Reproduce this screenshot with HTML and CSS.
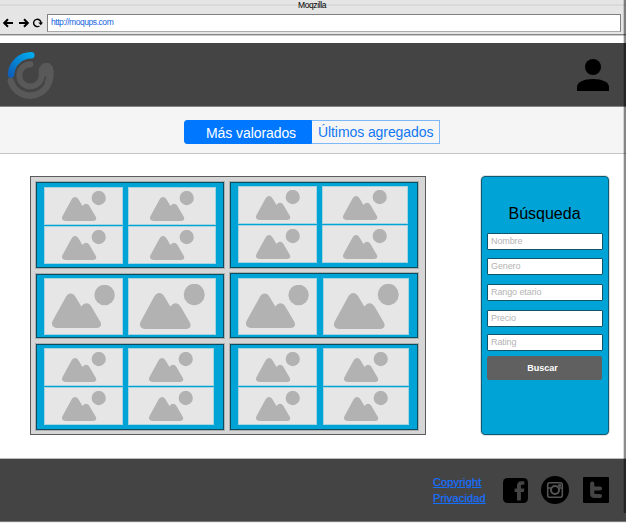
FILE: index.html
```html
<!DOCTYPE html>
<html lang="es">
<head>
<meta charset="utf-8">
<title>Moqzilla</title>
<link rel="stylesheet" href="styles.css">
</head>
<body>
<svg class="defs" aria-hidden="true">
  <symbol id="picture" viewBox="0 0 133 90" preserveAspectRatio="none">
    <circle cx="111" cy="21" r="21.5"/>
    <path d="M12 90C1 90-3 83 2 74L28 27C34 15 45 15 51 27L62 45C69 36 77 36 83 45L102 77C106 85 102 90 94 90Z"/>
  </symbol>
</svg>
<div class="chrome">
  <div class="window-title">Moqzilla</div>
  <div class="toolbar">
    <svg class="tool-icons" viewBox="0 0 43 14" fill="none" stroke="#000" stroke-width="2">
      <path d="M13 7H4.5M8 3.2L4.2 7L8 10.8M19 7H27.5M24 3.2L27.8 7L24 10.8"/>
      <path d="M39.4 10A3.7 3.7 0 1 1 41 7" stroke-width="1.4"/>
      <path d="M38.3 6.5H43L40.8 9.3Z" fill="#000" stroke="none"/>
    </svg>
    <div class="address">http://moqups.com</div>
  </div>
</div>
<header class="header">
  <svg class="logo" viewBox="0 0 48 50" fill="none" stroke-linecap="round">
    <defs><linearGradient id="blue" x1="1" y1="0" x2="0" y2="1"><stop offset="0" stop-color="#00a8ec"/><stop offset="1" stop-color="#0d62bb"/></linearGradient></defs>
    <circle cx="39.3" cy="20" r="7.2" fill="#595959"/>
    <path d="M32.1 20H46.5V27Q45 31 42 34L35 32Z" fill="#595959"/>
    <path d="M3.8 31A20 20 0 0 0 43 24" stroke="#595959" stroke-width="6.5"/>
    <path d="M23.5 14.2A11.2 11.2 0 1 0 34.7 25.5V20" stroke="#595959" stroke-width="6"/>
    <path d="M38.5 27A15.5 15.5 0 0 1 9 31" stroke="#444" stroke-width="1.6"/>
    <path d="M24.3 5.3A20.3 20.3 0 0 0 4 24.5" stroke="url(#blue)" stroke-width="6.5"/>
  </svg>
  <svg class="user" viewBox="0 0 32 32"><circle cx="16" cy="8" r="8"/><path d="M0 32V28C0 23 7 20 16 20S32 23 32 28V32Z"/></svg>
</header>
<nav class="nav">
  <div class="tabs"><a class="tab active">Más valorados</a><a class="tab">Últimos agregados</a></div>
</nav>
<main class="main">
  <section class="gallery">
    <div class="column column-left">
      <div class="card quad"><i><svg><use href="#picture"/></svg></i><i><svg><use href="#picture"/></svg></i><i><svg><use href="#picture"/></svg></i><i><svg><use href="#picture"/></svg></i></div>
      <div class="card pair"><i><svg><use href="#picture"/></svg></i><i><svg><use href="#picture"/></svg></i></div>
      <div class="card quad last"><i><svg><use href="#picture"/></svg></i><i><svg><use href="#picture"/></svg></i><i><svg><use href="#picture"/></svg></i><i><svg><use href="#picture"/></svg></i></div>
    </div>
    <div class="column column-right">
      <div class="card quad"><i><svg><use href="#picture"/></svg></i><i><svg><use href="#picture"/></svg></i><i><svg><use href="#picture"/></svg></i><i><svg><use href="#picture"/></svg></i></div>
      <div class="card pair"><i><svg><use href="#picture"/></svg></i><i><svg><use href="#picture"/></svg></i></div>
      <div class="card quad last"><i><svg><use href="#picture"/></svg></i><i><svg><use href="#picture"/></svg></i><i><svg><use href="#picture"/></svg></i><i><svg><use href="#picture"/></svg></i></div>
    </div>
  </section>
  <aside class="search">
    <h1>Búsqueda</h1>
    <div class="fields">
      <div class="field">Nombre</div>
      <div class="field">Genero</div>
      <div class="field">Rango etario</div>
      <div class="field">Precio</div>
      <div class="field">Rating</div>
    </div>
    <button class="submit">Buscar</button>
  </aside>
</main>
<footer class="footer">
  <div class="links"><a>Copyright</a><a>Privacidad</a></div>
  <svg class="facebook" viewBox="0 0 25 25"><rect width="25" height="25" rx="4.5"/><path d="M14 22.5V14H11.6V10.5H14V8C14 4.8 15.5 3.2 18.3 3.2H21.3V6.8H19.5C18.3 6.8 17.9 7.3 17.9 8.3V10.5H21.3L20.9 14H17.9V22.5Z" fill="#444"/></svg>
  <svg class="instagram" viewBox="0 0 28 28"><circle cx="14" cy="14" r="14"/><g fill="none" stroke="#555" stroke-width="1.6"><rect x="6.7" y="6.7" width="14.6" height="14.6" rx="2"/><path d="M7 12H10.2M17.8 12H21"/><circle cx="14" cy="14" r="4" stroke-width="2"/></g><rect x="17.2" y="8.2" width="2.8" height="2.6" fill="#555"/></svg>
  <svg class="twitter" viewBox="0 0 26 26"><rect width="26" height="26" rx="1"/><path d="M9.2 6.5V16.5Q9.2 19 12 19H17M9.2 11.5H17" fill="none" stroke="#444" stroke-width="4.2" stroke-linecap="round"/></svg>
</footer>
</body>
</html>
```
FILE: styles.css
```css
* { box-sizing: border-box; }
body {
  margin: 0;
  width: 626px;
  height: 523px;
  overflow: hidden;
  position: relative;
  background: #fff;
  font-family: "Liberation Sans", Arial, sans-serif;
}
body::after {
  content: "";
  position: absolute;
  top: 0;
  right: 0;
  width: 2px;
  height: 513px;
  border-left: 1px solid rgba(0, 0, 0, .14);
  background: rgba(0, 0, 0, .45);
  background-clip: padding-box;
}
svg { display: block; }
.defs { display: none; }

.chrome {
  height: 36px;
  background: linear-gradient(#e5e5e5 4px, #d9d9d9 4px, #d9d9d9 6px, #e5e5e5 6px);
  border-bottom: 1px solid #ccc;
  box-shadow: inset 0 -1px #858585;
}
.window-title {
  height: 14px;
  padding-right: 2px;
  text-align: center;
  font-size: 8.5px;
  line-height: 11px;
  letter-spacing: -.4px;
}
.toolbar { display: flex; height: 18px; }
.tool-icons { width: 43px; height: 14px; margin-top: 2px; }
.address {
  width: 574px;
  margin-left: 4px;
  padding-left: 3px;
  border: 1px solid #808080;
  border-bottom-color: #aaa;
  background: #fff;
  color: #1463dd;
  font-size: 8.5px;
  line-height: 15px;
  letter-spacing: -.45px;
}

.header {
  display: flex;
  justify-content: space-between;
  height: 64px;
  margin-top: 7px;
  padding: 0 17px 0 7px;
  background: #444;
  border-bottom: 1px solid #858585;
}
.logo { width: 48px; height: 50px; margin-top: 7px; }
.user { width: 32px; height: 32px; margin-top: 16px; }

.nav {
  display: flex;
  height: 47px;
  padding: 13px 0 0 184px;
  background: #f5f5f5;
  border-bottom: 1px solid #c5c5c5;
}
.tabs { display: flex; width: 256px; height: 24px; }
.tab {
  width: 128px;
  padding-left: 6px;
  border: 1px solid #7db8fa;
  border-left: 0;
  color: #1278f2;
  font-size: 14px;
  line-height: 23px;
  letter-spacing: -.08px;
  white-space: nowrap;
}
.tab.active {
  padding-left: 21px;
  border: 1px solid #0077ff;
  border-radius: 3px 0 0 3px;
  background: #0077ff;
  color: #fff;
  line-height: 25px;
}

.main { display: flex; height: 305px; padding: 22px 0 0 30px; }
.gallery {
  display: flex;
  gap: 6px;
  width: 396px;
  height: 259px;
  padding: 5px;
  border: 1px solid #5b5b5b;
  background: #d6d6d6;
}
.column {
  display: grid;
  grid-template-rows: 86px 65px 86px;
  row-gap: 6px;
  width: 188px;
  height: 248px;
}
.card {
  display: grid;
  border: 1px solid #0c4c60;
  background: #00a3d5;
  outline: 1px solid rgba(0, 0, 0, .18);
}
.card i {
  display: grid;
  place-items: center;
  border: 1px solid #a6d5e1;
  background: #e6e6e6;
}
.card svg { width: 44px; height: 30px; fill: #b2b2b2; }
.quad { grid-template: 38px 38px / 79px 88px; gap: 1px 5px; padding: 4px 7px; }
.pair { grid-template: 57px / 79px 88px; column-gap: 5px; margin-bottom: 1px; padding: 3px 7px; }
.pair svg { width: 63px; height: 43px; }
.pair i:nth-child(2) svg { width: 65px; height: 45px; }
.column-right .quad { grid-template-columns: 79px 86px; padding-top: 3px; }
.column-right .pair {
  grid-template-columns: 79px 86px;
  column-gap: 6px;
  height: 65px;
  margin: -1px 0 2px;
  padding-top: 4px;
}
.column .last {
  grid-template-columns: 79px 86px;
  height: 86px;
  margin-top: -1px;
  padding-top: 3px;
}
.column-right .last { column-gap: 6px; }

.search {
  width: 128px;
  height: 259px;
  margin-left: 55px;
  padding: 26px 5px 0;
  border: 1px solid #0d5a72;
  border-radius: 4px;
  outline: 1px solid rgba(0, 0, 0, .12);
  background: #00a3d5;
}
.search h1 {
  height: 30px;
  margin: 0;
  padding-right: 1px;
  text-align: center;
  font-size: 16px;
  font-weight: 400;
  line-height: 22px;
}
.fields { display: grid; grid-template-rows: 25px 26px 26px 24px 17px; }
.field {
  width: 116px;
  height: 17px;
  padding-left: 3px;
  border: 1px solid #125468;
  border-radius: 1px;
  background: #fff;
  color: #b3b3b3;
  font-size: 9px;
  line-height: 15px;
  letter-spacing: -.1px;
}
.submit {
  display: block;
  width: 115px;
  height: 24px;
  margin-top: 5px;
  padding: 0 4px 0 0;
  border: 0;
  border-radius: 2px;
  background: #606060;
  color: #fff;
  font: bold 9px "Liberation Sans", Arial, sans-serif;
}

.footer {
  display: flex;
  height: 63px;
  padding: 15px 17px 0 433px;
  background: #444;
  border-bottom: 1px solid #777;
  box-shadow: 0 -1px #bbb, 0 1px #eee;
}
.links { display: grid; grid-auto-rows: 16px; width: 70px; align-content: start; }
.links a {
  color: #1570ff;
  font-size: 11px;
  line-height: 16px;
  letter-spacing: .14px;
  text-decoration: underline;
  -webkit-text-stroke: .25px #1570ff;
}
.facebook { width: 25px; height: 25px; margin-top: 4px; }
.instagram { width: 28px; height: 28px; margin: 2px 0 0 13px; }
.twitter { width: 26px; height: 26px; margin: 3px 0 0 14px; }
```
